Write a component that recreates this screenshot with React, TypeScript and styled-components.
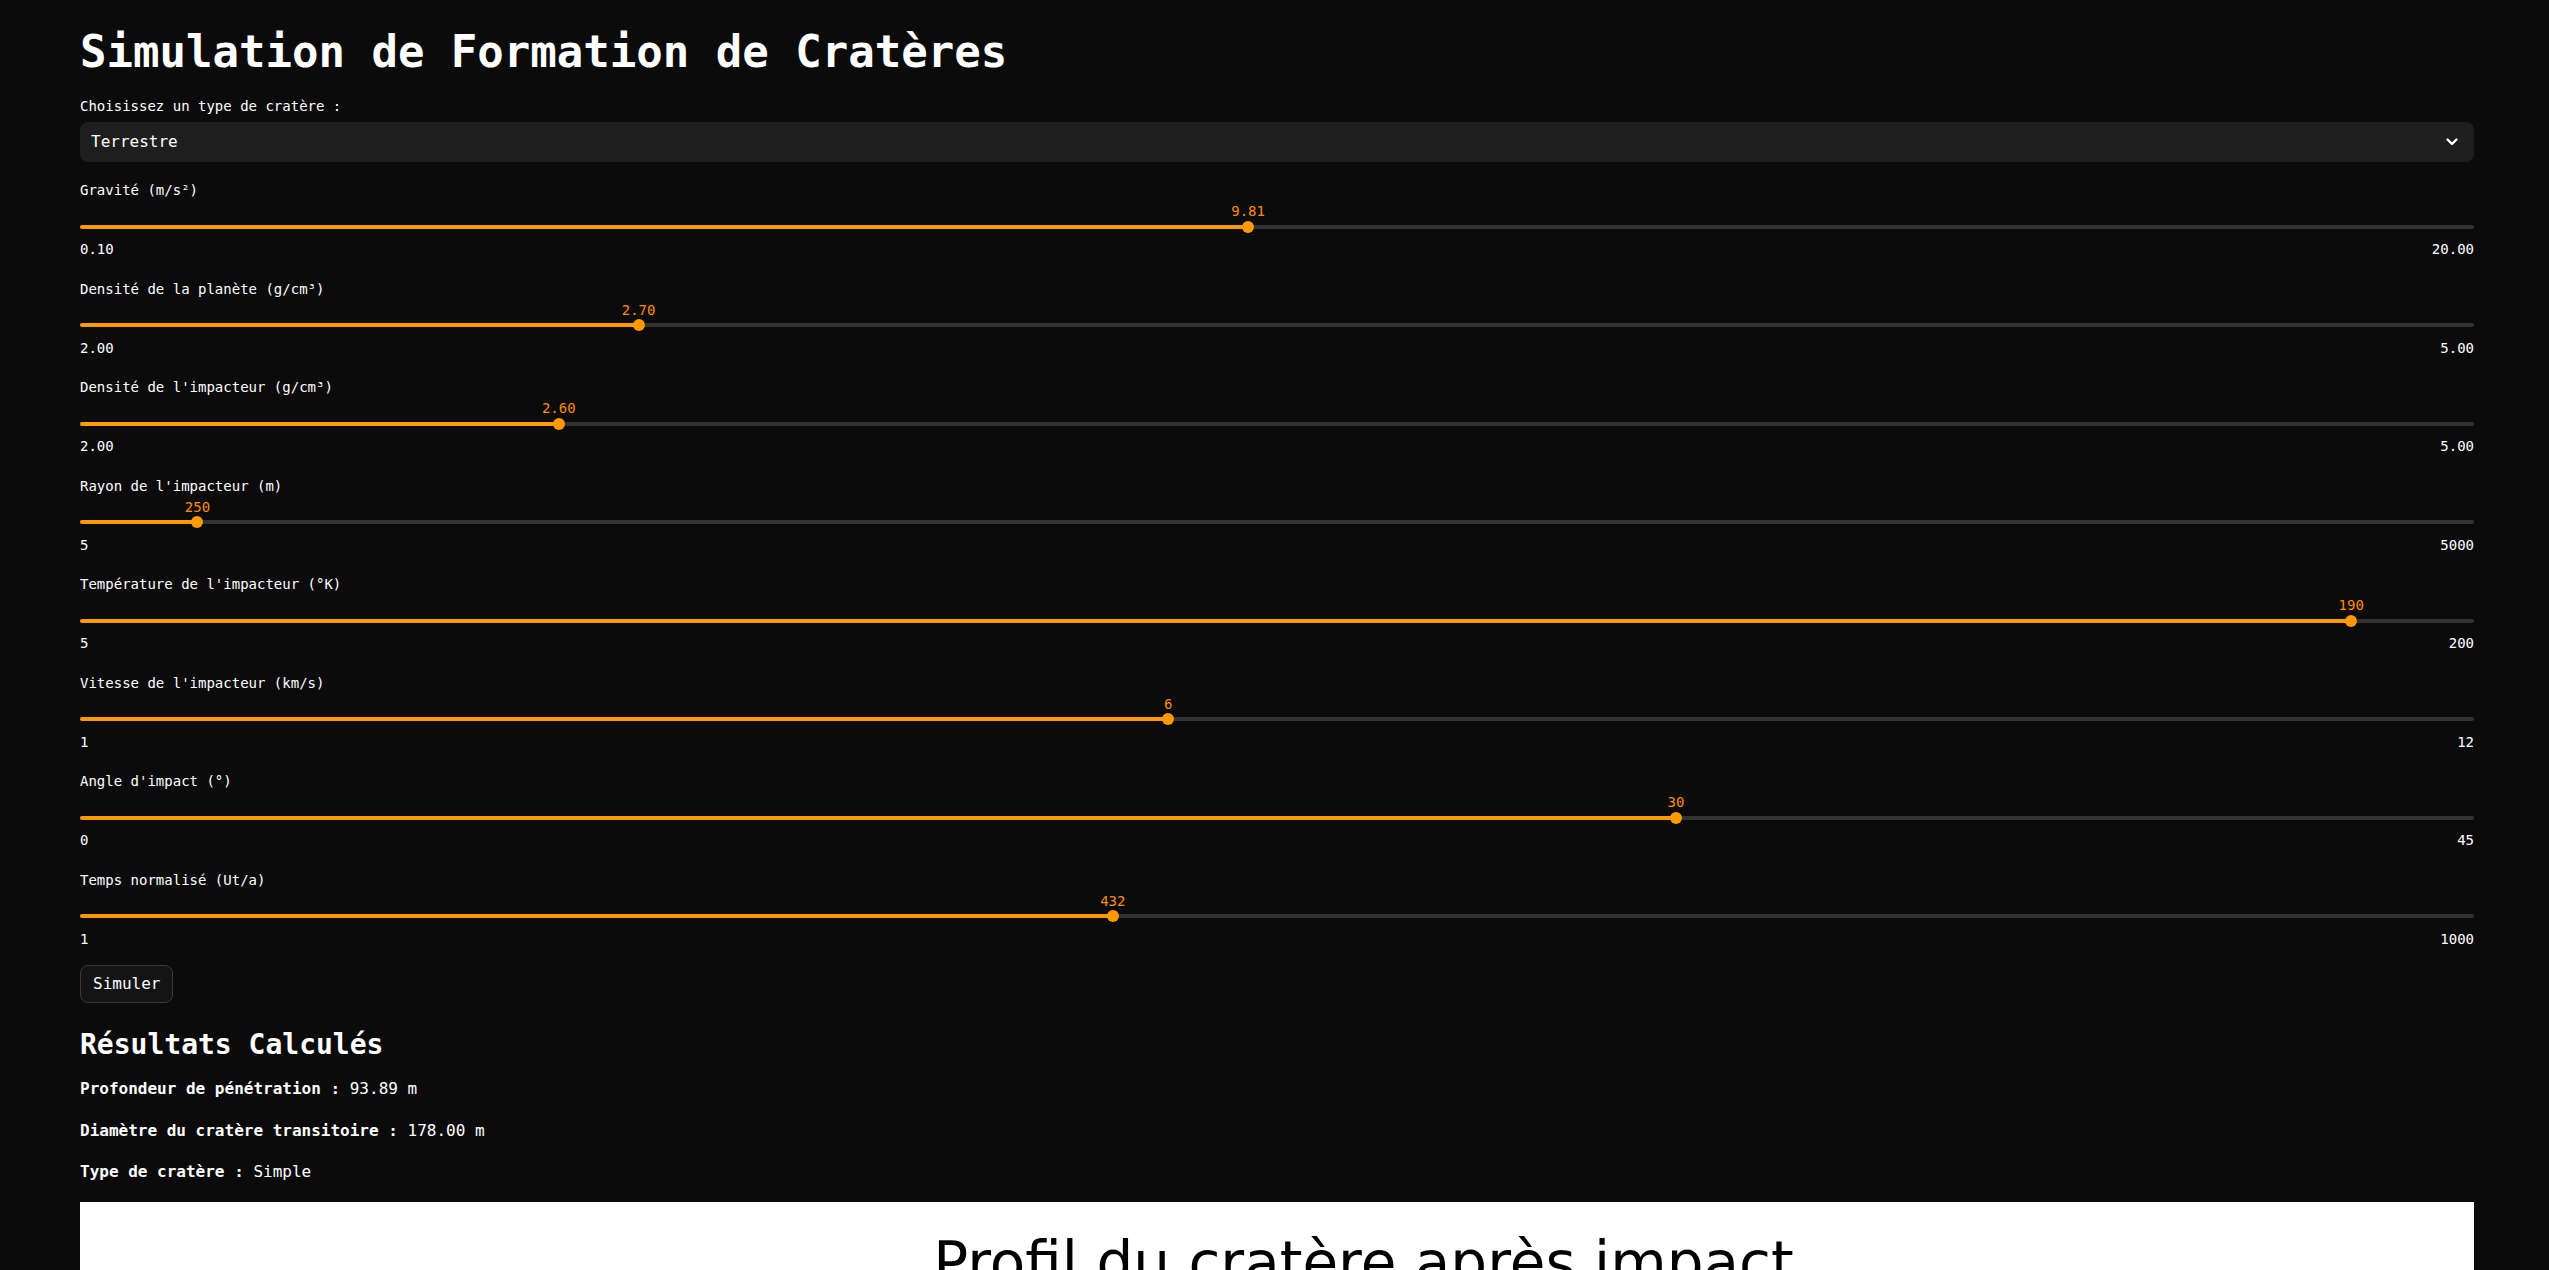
import React from "react";
import styled, { createGlobalStyle } from "styled-components";

const GlobalStyle = createGlobalStyle`
  html, body {
    margin: 0;
    padding: 0;
    background: #0b0b0b;
    color: #ffffff;
    font-family: "DejaVu Sans Mono", "Liberation Mono", monospace;
  }
  * { box-sizing: border-box; }
`;

const Page = styled.main`
  display: flex;
  flex-direction: column;
  padding: 26px 75px 0 80px;
`;

const Title = styled.h1`
  margin: 0;
  font-size: 44px;
  line-height: 52px;
  font-weight: 700;
`;

const FieldLabel = styled.label`
  display: block;
  margin-top: 18.2px;
  font-size: 14px;
  line-height: 20px;
`;

const SelectBox = styled.div`
  margin-top: 5.8px;
  height: 40px;
  background: #1e1e1e;
  border-radius: 8px;
  display: flex;
  align-items: center;
  justify-content: space-between;
  padding: 0 16px 0 11px;
  font-size: 16px;
`;

const SliderList = styled.div`
  margin-top: 18.2px;
  display: flex;
  flex-direction: column;
  gap: 19.54px;
`;

const SliderBlock = styled.div`
  display: flex;
  flex-direction: column;
`;

const SliderLabel = styled.div`
  font-size: 14px;
  line-height: 20px;
`;

const Track = styled.div`
  position: relative;
  margin-top: 24.8px;
  height: 4px;
  border-radius: 2px;
  background: #333333;
`;

const Fill = styled.div`
  height: 100%;
  border-radius: 2px;
  background: #ff9900;
`;

const Thumb = styled.div`
  position: absolute;
  top: 50%;
  width: 12px;
  height: 12px;
  border-radius: 50%;
  background: #ff9900;
  transform: translate(-50%, -50%);
`;

const ValueBubble = styled.div`
  position: absolute;
  top: -21.85px;
  font-size: 14px;
  line-height: 16px;
  color: #ff8c00;
  white-space: nowrap;
  transform: translateX(-50%);
`;

const Bounds = styled.div`
  margin-top: 10.16px;
  display: flex;
  justify-content: space-between;
  font-size: 14px;
  line-height: 20px;
`;

const SimulateButton = styled.button`
  align-self: flex-start;
  margin-top: 16.3px;
  height: 38px;
  padding: 0 12px;
  border: 1px solid #3a3a3a;
  border-radius: 8px;
  background: #141414;
  color: #ffffff;
  font-family: "DejaVu Sans Mono", "Liberation Mono", monospace;
  font-size: 16px;
  line-height: 36px;
`;

const ResultsTitle = styled.h2`
  margin: 24.3px 0 0;
  font-size: 28px;
  line-height: 36px;
  font-weight: 700;
`;

const ResultList = styled.div`
  margin-top: 14.2px;
  display: flex;
  flex-direction: column;
  gap: 17.5px;
`;

const ResultLine = styled.p`
  margin: 0;
  font-size: 16px;
  line-height: 24px;
`;

const ChartBox = styled.section`
  margin-top: 17.5px;
  height: 620px;
  background: #ffffff;
  display: flex;
  justify-content: center;
  align-items: flex-start;
  padding: 27px 0 0 173px;
`;

const ChartTitle = styled.div`
  font-family: "DejaVu Sans", "Liberation Sans", sans-serif;
  font-size: 58px;
  line-height: 68px;
  color: #000000;
  white-space: nowrap;
`;

const Chevron = () => (
  <svg width="12" height="8" viewBox="0 0 12 8" aria-hidden="true">
    <polyline
      points="1.5,1.5 6,6 10.5,1.5"
      fill="none"
      stroke="#ffffff"
      strokeWidth="2.4"
      strokeLinecap="round"
      strokeLinejoin="round"
    />
  </svg>
);

type SliderDef = {
  label: string;
  min: number;
  max: number;
  value: number;
  decimals: number;
};

const sliders: SliderDef[] = [
  { label: "Gravité (m/s²)", min: 0.1, max: 20, value: 9.81, decimals: 2 },
  { label: "Densité de la planète (g/cm³)", min: 2, max: 5, value: 2.7, decimals: 2 },
  { label: "Densité de l'impacteur (g/cm³)", min: 2, max: 5, value: 2.6, decimals: 2 },
  { label: "Rayon de l'impacteur (m)", min: 5, max: 5000, value: 250, decimals: 0 },
  { label: "Température de l'impacteur (°K)", min: 5, max: 200, value: 190, decimals: 0 },
  { label: "Vitesse de l'impacteur (km/s)", min: 1, max: 12, value: 6, decimals: 0 },
  { label: "Angle d'impact (°)", min: 0, max: 45, value: 30, decimals: 0 },
  { label: "Temps normalisé (Ut/a)", min: 1, max: 1000, value: 432, decimals: 0 },
];

const Slider = ({ def }: { def: SliderDef }) => {
  const pct = ((def.value - def.min) / (def.max - def.min)) * 100;
  return (
    <SliderBlock>
      <SliderLabel>{def.label}</SliderLabel>
      <Track>
        <Fill style={{ width: `${pct}%` }} />
        <Thumb style={{ left: `${pct}%` }} />
        <ValueBubble style={{ left: `${pct}%` }}>{def.value.toFixed(def.decimals)}</ValueBubble>
      </Track>
      <Bounds>
        <span>{def.min.toFixed(def.decimals)}</span>
        <span>{def.max.toFixed(def.decimals)}</span>
      </Bounds>
    </SliderBlock>
  );
};

export default function App() {
  return (
    <>
      <GlobalStyle />
      <Page>
        <Title>Simulation de Formation de Cratères</Title>
        <FieldLabel>Choisissez un type de cratère :</FieldLabel>
        <SelectBox>
          <span>Terrestre</span>
          <Chevron />
        </SelectBox>
        <SliderList>
          {sliders.map((s) => (
            <Slider key={s.label} def={s} />
          ))}
        </SliderList>
        <SimulateButton>Simuler</SimulateButton>
        <ResultsTitle>Résultats Calculés</ResultsTitle>
        <ResultList>
          <ResultLine>
            <strong>Profondeur de pénétration :</strong> 93.89 m
          </ResultLine>
          <ResultLine>
            <strong>Diamètre du cratère transitoire :</strong> 178.00 m
          </ResultLine>
          <ResultLine>
            <strong>Type de cratère :</strong> Simple
          </ResultLine>
        </ResultList>
        <ChartBox>
          <ChartTitle>Profil du cratère après impact</ChartTitle>
        </ChartBox>
      </Page>
    </>
  );
}
